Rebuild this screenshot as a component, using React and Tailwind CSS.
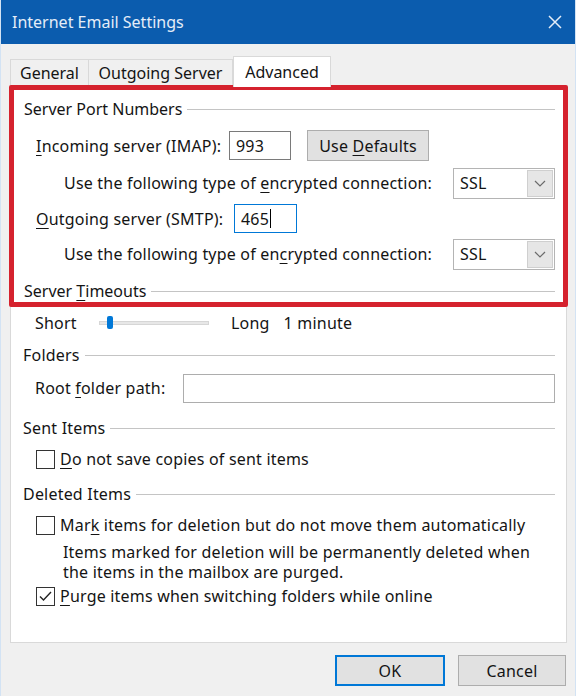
import React from 'react';

const U = ({ children }) => (
  <span className="underline decoration-1 underline-offset-[3px]">{children}</span>
);

const GroupLabel = ({ children }) => (
  <div className="flex flex-1 items-center gap-[5px]">
    <span className="leading-[21px]">{children}</span>
    <div className="h-px flex-1 bg-[#c4c4c4]" />
  </div>
);

const TextBox = ({ value, focused, className = '' }) => (
  <div
    className={`flex h-[29px] items-center bg-white px-[6px] ${
      focused ? 'border border-[#0078d7]' : 'border border-[#7a7a7a]'
    } ${className}`}
  >
    <span>{value}</span>
    {focused && <span className="ml-px h-[19px] w-px bg-black" />}
  </div>
);

const Select = () => (
  <div className="flex h-[31px] w-[102px] items-center border border-[#b4b4b4] bg-white pl-[6px] pr-px">
    <span className="flex-1">SSL</span>
    <div className="flex h-[27px] w-[26px] items-center justify-center border border-[#cfcfcf] bg-[#e6e6e6]">
      <svg width="12" height="7" viewBox="0 0 12 7" fill="none">
        <path d="M1 1l5 5 5-5" stroke="#6b6b6b" strokeWidth="1.2" />
      </svg>
    </div>
  </div>
);

const Checkbox = ({ checked }) => (
  <div className="flex h-[19px] w-[19px] shrink-0 items-center justify-center border border-[#333] bg-white">
    {checked && (
      <svg width="15" height="15" viewBox="0 0 15 15" fill="none">
        <path d="M2 7.5l3.5 3.5L13 3" stroke="#222" strokeWidth="1.4" />
      </svg>
    )}
  </div>
);

const Tab = ({ label, active, className = '' }) =>
  active ? (
    <div className={`relative z-10 -mb-px flex h-[31px] items-center justify-center border border-b-0 border-[#d9d9d9] bg-white ${className}`}>
      {label}
    </div>
  ) : (
    <div className={`flex h-[27px] items-center justify-center border border-b-0 border-[#d9d9d9] bg-[#f0f0f0] ${className}`}>
      {label}
    </div>
  );

export default function App() {
  return (
    <div className="flex h-[696px] w-[576px] flex-col border-x border-[#d3e3f4] bg-[#f0f0f0] font-['Noto_Sans',sans-serif] text-[16px] tracking-[0.2px] text-[#141414]">
      {/* Title bar */}
      <div className="flex h-[44px] shrink-0 items-center justify-between bg-[#0b5cae] pl-[11px] pr-[13px]">
        <span className="text-[16px] tracking-normal text-[#e4edf8]">Internet Email Settings</span>
        <svg width="14" height="14" viewBox="0 0 14 14" fill="none">
          <path d="M1 1l12 12M13 1L1 13" stroke="#e4edf8" strokeWidth="1.5" />
        </svg>
      </div>

      {/* Tabs */}
      <div className="mt-[12px] flex h-[30px] items-end pl-[9px] tracking-normal">
        <Tab label="General" className="w-[79px]" />
        <Tab label="Outgoing Server" className="w-[144px] border-l-0" />
        <Tab label="Advanced" active className="w-[98px]" />
      </div>

      {/* Panel */}
      <div className="ml-[9px] flex h-[557px] w-[557px] flex-col border border-[#d9d9d9] bg-white">
        {/* Highlighted section */}
        <div className="-mx-[2px] -mt-[2px] flex flex-col rounded-[2px] border-[5px] border-[#d5222e] pl-[10px] pr-[8px]">
          <div className="flex h-[38px] items-center tracking-normal">
            <GroupLabel>Server Port Numbers</GroupLabel>
          </div>
          <div className="flex h-[35px] items-center pl-[12px]">
            <span className="w-[193px]"><U>I</U>ncoming server (IMAP):</span>
            <TextBox value="993" className="w-[62px]" />
            <div className="ml-[16px] flex h-[31px] w-[122px] items-center justify-center border border-[#adadad] bg-[#e1e1e1]">
              <span>Use <U>D</U>efaults</span>
            </div>
          </div>
          <div className="flex h-[40px] items-center justify-between pl-[40px]">
            <span>Use the following type of <U>e</U>ncrypted connection:</span>
            <Select />
          </div>
          <div className="flex h-[31px] items-center pl-[12px]">
            <span className="w-[198px]"><U>O</U>utgoing server (SMTP):</span>
            <TextBox value="465" focused className="w-[63px]" />
          </div>
          <div className="flex h-[40px] items-center justify-between pl-[40px]">
            <span>Use the following type of en<U>c</U>rypted connection:</span>
            <Select />
          </div>
          <div className="flex h-[28px] items-center pt-[7px] tracking-normal">
            <GroupLabel>Server <U>T</U>imeouts</GroupLabel>
          </div>
        </div>

        <div className="flex flex-1 flex-col pl-[12px] pr-[11px]">
          <div className="flex h-[32px] items-center pl-[12px]">
            <span className="w-[64px]">Short</span>
            <div className="relative flex h-[14px] w-[110px] items-center">
              <div className="h-[4px] w-full border border-[#d6d6d6] bg-[#e7e7e7]" />
              <div className="absolute left-[8px] top-0 h-[13px] w-[6px] rounded-[2px] bg-[#0078d7]" />
            </div>
            <span className="ml-[22px]">Long</span>
            <span className="ml-[14px]">1 minute</span>
          </div>

          <div className="flex h-[32px] items-center">
            <GroupLabel>Folders</GroupLabel>
          </div>
          <div className="flex h-[34px] items-center pl-[12px]">
            <span className="w-[148px]">Root <U>f</U>older path:</span>
            <TextBox value="" className="flex-1 border-[#adadad]" />
          </div>

          <div className="flex h-[39px] items-center pt-[7px]">
            <GroupLabel>Sent Items</GroupLabel>
          </div>
          <div className="flex h-[30px] items-center gap-[5px] pl-[13px]">
            <Checkbox />
            <span><U>D</U>o not save copies of sent items</span>
          </div>

          <div className="flex h-[36px] items-center pt-[4px]">
            <GroupLabel>Deleted Items</GroupLabel>
          </div>
          <div className="flex h-[30px] items-center gap-[5px] pl-[13px]">
            <Checkbox />
            <span>Mar<U>k</U> items for deletion but do not move them automatically</span>
          </div>
          <div className="pl-[40px] pt-[2px] leading-[20px]">
            <div>Items marked for deletion will be permanently deleted when</div>
            <div>the items in the mailbox are purged.</div>
          </div>
          <div className="flex h-[28px] items-center gap-[5px] pl-[13px]">
            <Checkbox checked />
            <span><U>P</U>urge items when switching folders while online</span>
          </div>
        </div>
      </div>

      {/* Buttons */}
      <div className="mt-[12px] flex justify-end gap-[13px] pr-[9px]">
        <div className="flex h-[31px] w-[110px] items-center justify-center border-2 border-[#0078d7] bg-[#e1e1e1]">
          OK
        </div>
        <div className="flex h-[31px] w-[108px] items-center justify-center border border-[#adadad] bg-[#e1e1e1]">
          Cancel
        </div>
      </div>
    </div>
  );
}
